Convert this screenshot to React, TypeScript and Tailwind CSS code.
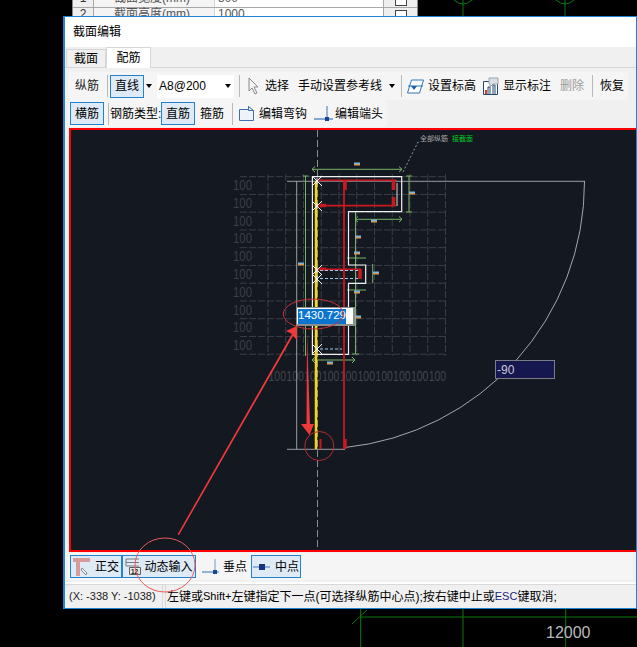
import type { ReactNode } from "react";

const cjk = "font-['Liberation_Sans','Noto_Sans_CJK_SC',sans-serif]";

function Sep({ className = "" }: { className?: string }) {
  return <div className={`w-px h-[22px] shrink-0 bg-[#b9b9b9] ${className}`} />;
}

function Caret({ className = "" }: { className?: string }) {
  return <div className={`w-0 h-0 shrink-0 border-x-[3.5px] border-x-transparent border-t-[4px] border-t-black ${className}`} />;
}

function Btn({ children, className = "" }: { children: ReactNode; className?: string }) {
  return (
    <div className={`flex items-center justify-center shrink-0 border border-[#2183cf] bg-[#deeaf5] ${className}`}>
      {children}
    </div>
  );
}

function CursorIcon() {
  return (
    <svg width="12" height="18" viewBox="0 0 12 18" className="ml-[8px] shrink-0">
      <path d="M1 1v13l3-3 3 6 2-1-3-6h4z" fill="#f4f4f4" stroke="#8a8a8a" />
    </svg>
  );
}

function LevelIcon() {
  return (
    <svg width="17" height="15" viewBox="0 0 17 15" className="ml-[5px] shrink-0">
      <path d="M4.5 1h12l-4 13H.5z" fill="#fff" stroke="#2b77bd" />
      <path d="M1 7h15" stroke="#2b77bd" />
      <path d="M4 7h6l-3 4z" fill="#1c5ea8" />
    </svg>
  );
}

function NoteIcon() {
  return (
    <svg width="16" height="18" viewBox="0 0 16 18" className="ml-[7px] shrink-0">
      <path d="M.5 4.5h14v13H.5z" fill="#fff" stroke="#24496f" />
      <path d="M5 17V10h2v7M10 17V8h2v9" fill="#fff" stroke="#24496f" />
      <path d="M2 13h2v4H2z" fill="#d9401e" />
      <path d="M6 1h9v6h-5l-3 3V7H6z" fill="#d9dfe6" stroke="#9aa5b0" />
    </svg>
  );
}

function HookIcon() {
  return (
    <svg width="15" height="17" viewBox="0 0 15 17" className="ml-[6px] shrink-0">
      <path d="M.5 4.5h9v-3l5 4v10H.5z" fill="#eef3fa" stroke="#3c6fb4" />
      <path d="M9.5 1.5v4h5" fill="none" stroke="#3c6fb4" />
    </svg>
  );
}

function EndIcon() {
  return (
    <svg width="19" height="16" viewBox="0 0 19 16" className="ml-[7px] shrink-0">
      <path d="M0 13h19" stroke="#5b8ecb" strokeWidth="1.5" />
      <path d="M13 0v13" stroke="#3d74b8" />
      <rect x="11" y="11" width="4" height="4" fill="#1d3f86" />
    </svg>
  );
}

function OrthoIcon() {
  return (
    <svg width="18" height="20" viewBox="0 0 18 20" className="mr-[4px]">
      <path d="M0 1h17v4H7v14H3V5H0z" fill="#d79a9d" />
      <path d="M9 11l5 5-1 2-5-5z" fill="#e9eef3" stroke="#69727c" strokeWidth=".8" />
    </svg>
  );
}

function DynIcon() {
  return (
    <svg width="18" height="18" viewBox="0 0 18 18">
      <path d="M1 1h13M1 1v7h13M1 4.500h13" fill="none" stroke="#77797c" />
      <path d="M4.500 9.500h11v7h-11z" fill="#e8e8e8" stroke="#5f5f5f" />
      <text x="6" y="15.500" fontSize="6.500" fontFamily="Liberation Sans" fontWeight="700" fill="#222">12</text>
    </svg>
  );
}

function PerpIcon() {
  return (
    <svg width="17" height="16" viewBox="0 0 17 16">
      <path d="M0 13h17" stroke="#6e9bd0" strokeWidth="1.500" />
      <path d="M13 0v13" stroke="#6e9bd0" />
      <rect x="11" y="11" width="4" height="4" fill="#1d4590" />
    </svg>
  );
}

function MidIcon() {
  return (
    <svg width="17" height="8" viewBox="0 0 17 8">
      <path d="M0 4h17" stroke="#6e9bd0" strokeWidth="1.500" />
      <rect x="6" y="1" width="6" height="6" fill="#15337e" />
    </svg>
  );
}

function Cross({ x, y }: { x: number; y: number }) {
  return (
    <path
      d={`M${x - 5} ${y - 5}L${x + 5} ${y + 5}M${x - 5} ${y + 5}L${x + 5} ${y - 5}M${x} ${y - 3}v6`}
      stroke="#f2f2f2"
      strokeWidth="1"
    />
  );
}

const gridY = [0, 1, 2, 3, 4, 5, 6, 7, 8, 9, 10].map((k) => 176.7 + 17.75 * k);
const gridX = [0, 1, 2, 3, 4, 5, 6, 7, 8, 9, 10].map((k) => 268 + 17.75 * k);
const labelY = [0, 1, 2, 3, 4, 5, 6, 7, 8, 9].map((k) => 185 + 17.8 * k);
const labelX = [0, 1, 2, 3, 4, 5, 6, 7, 8, 9].map((k) => 268.5 + 17.8 * k);
const marks = [
  [357, 164], [412, 193], [374, 221], [358, 237], [357, 253], [301, 264],
  [376, 273], [357, 292], [358, 317], [330, 363],
];

function Drawing() {
  return (
    <svg viewBox="71 130 566 420" className="w-[566px] h-[420px] block">
      {gridY.map((y) => (
        <path key={y} d={`M240 ${y}H447`} stroke="#3a3e47" strokeDasharray="7 2" />
      ))}
      {gridX.map((x) => (
        <path key={x} d={`M${x} 174V356`} stroke="#3a3e47" strokeDasharray="7 2" />
      ))}
      {labelY.map((y) => (
        <text key={y} x="233" y={y + 5} fontSize="14" fontFamily="Liberation Sans" fill="#3b3f47" textLength="19" lengthAdjust="spacingAndGlyphs">100</text>
      ))}
      {labelX.map((x) => (
        <text key={x} x={x} y="381" fontSize="14" fontFamily="Liberation Sans" fill="#42464e" textLength="17.500" lengthAdjust="spacingAndGlyphs">100</text>
      ))}

      <path d="M317.500 130V550" stroke="#8c8c8c" strokeDasharray="7 3" />
      <path d="M287 181.300H585M296.700 181V449.300M287 449.300H345" stroke="#9b9da1" fill="none" />
      <path d="M584.500 181A267 267 0 0 1 345 447.500" stroke="#a4a6aa" fill="none" />

      <path d="M305.500 176V356M312 169.300H402M409 176V212M355 219.300H402M355.500 212V354M347 258H366M372.700 264V283M347 290H366M312 360H355" stroke="#76b564" fill="none" />
      <path d="M315 166.500l-3 2.800 3 2.800M399 166.500l3 2.800-3 2.800M406 176h6M406 212h6M302.500 176h6M399 216.500l3 2.800-3 2.800M358 216.500l-3 2.800 3 2.800M352 354h7M315 357l-3 3 3 3M352 357l3 3-3 3" stroke="#76b564" fill="none" />

      <path d="M312.400 176.700H401.700V211.600H348.500V265H365.700V283.300H348.500V354.300H312.400Z" stroke="#f0f0f0" strokeWidth="1.200" fill="none" />
      <path d="M315 181H397" stroke="#4b8f98" strokeWidth="1.200" />
      <path d="M316 181V449" stroke="#f5d60f" strokeWidth="2.500" />

      <path d="M318 180.300H396M318 205.700H396M344 180V447M318 269.300H361" stroke="#c9181f" strokeWidth="1.800" fill="none" />
      <path d="M345 180v10M393.500 180v10M393.500 197v9M320 205.500h6M320 269.300h6M360 269v10M345 439v10" stroke="#c9181f" strokeWidth="3.500" fill="none" />
      <path d="M320.500 439v10" stroke="#c9181f" strokeWidth="2" />
      <path d="M397 183V206" stroke="#d8d8d8" />
      <path d="M320 270.500H360M320 278.500H360M320 349H342" stroke="#9ccbee" strokeDasharray="3 2" />

      <Cross x={317} y={181} />
      <Cross x={317} y={206} />
      <Cross x={317} y={270} />
      <Cross x={317} y={279} />
      <Cross x={317} y={349} />

      {marks.map(([x, y]) => (
        <g key={`${x}-${y}`}>
          <rect x={x - 3} y={y - 1.5} width="6" height="1.500" fill="#7db4dc" />
          <rect x={x - 3} y={y} width="6" height="1.500" fill="#d39a55" />
        </g>
      ))}

      <path d="M403 172L418 142H420" stroke="#9a9a9a" strokeDasharray="2 2" fill="none" />
      <text x="420" y="141" fontSize="7" fontFamily="Noto Sans CJK SC" fill="#a9a9a9">全部纵筋</text>
      <text x="452" y="141" fontSize="7" fontFamily="Noto Sans CJK SC" fill="#00cc22">接截面</text>
    </svg>
  );
}

export default function App() {
  return (
    <div className={`relative w-[637px] h-[647px] overflow-hidden bg-black text-[12px] leading-none text-black whitespace-nowrap ${cjk}`}>
      {/* CAD 背景 */}
      <svg width="637" height="647" className="absolute inset-0">
        <path d="M463 0V16M565 0V16M360.700 608V647M463 608V647M565.700 608V647M360 617H637" stroke="#0b7a12" fill="none" />
        <path d="M454 0Q463 8 472 0M556 0Q565 8 574 0" stroke="#0b7a12" fill="none" />
        <path d="M352 624L367 610" stroke="#0b7a12" />
      </svg>
      <div className="absolute left-[546px] top-[625px] text-[16px] text-[#b8b8b8]">12000</div>

      {/* 后面的属性窗口 */}
      <div className="absolute left-[72px] top-0 w-[346px] h-[16px] overflow-hidden bg-white border-x border-[#8a8a8a]">
        <div className="-mt-[8px]">
          {["截面宽度(mm)|800", "截面高度(mm)|1000"].map((row, i) => (
            <div key={row} className="flex h-[16px] border-b border-[#a8a8a8]">
              <div className="w-[21px] bg-[#efefef] border-r border-[#a8a8a8] text-center text-[#333]">{i + 1}</div>
              <div className="w-[121px] pl-[20px] border-r border-[#d0d0d0] text-[#555] bg-[#f4f4f4]">{row.split("|")[0]}</div>
              <div className="w-[169px] pl-[3px] border-r border-[#a8a8a8] text-[#555]">{row.split("|")[1]}</div>
              <div className="flex-1 flex justify-center items-center bg-[#efefef]">
                <div className="w-[12px] h-[12px] border border-[#444] bg-white" />
              </div>
            </div>
          ))}
        </div>
      </div>

      {/* 截面编辑 */}
      <div className="absolute left-[63px] top-[16px] w-[575px] h-[593px] flex flex-col border-x-2 border-y border-[#1d86d6] bg-[#f0f0f0]">
        <div className="h-[30px] shrink-0 bg-white flex items-center pl-[8px]">截面编辑</div>

        <div className="h-[21px] shrink-0 flex items-end border-b border-[#d6d6d6] pl-[1px]">
          <div className="w-[40px] h-[18px] flex items-center justify-center border border-b-0 border-[#d6d6d6]">截面</div>
          <div className="w-[45px] h-[21px] -mb-px flex items-center justify-center bg-white border border-b-0 border-[#d6d6d6]">配筋</div>
        </div>

        <div className="mt-[4px] ml-[3px] mr-[8px] h-[28px] shrink-0 flex items-center bg-[#f5f5f5] rounded-sm">
          <span className="ml-[7px] text-[#222]">纵筋</span>
          <Sep className="ml-[8px]" />
          <Btn className="ml-[2px] w-[34px] h-[23px]">直线</Btn>
          <Caret className="ml-[2px]" />
          <div className="ml-[5px] w-[77px] h-[23px] shrink-0 bg-white flex items-center justify-between pl-[2px] pr-[3px]">
            A8@200
            <Caret />
          </div>
          <Sep className="ml-[5px]" />
          <CursorIcon />
          <span className="ml-[5px]">选择</span>
          <span className="ml-[9px]">手动设置参考线</span>
          <Caret className="ml-[7px]" />
          <Sep className="ml-[6px]" />
          <LevelIcon />
          <span className="ml-[4px]">设置标高</span>
          <NoteIcon />
          <span className="ml-[4px]">显示标注</span>
          <span className="ml-[9px] text-[#9a9a9a]">删除</span>
          <Sep className="ml-[8px]" />
          <span className="ml-[7px]">恢复</span>
        </div>

        <div className="ml-[3px] w-[319px] h-[27px] shrink-0 flex items-center bg-[#f5f5f5] rounded-sm">
          <Btn className="ml-[2px] w-[34px] h-[23px]">横筋</Btn>
          <Sep className="ml-[4px]" />
          <span className="ml-[1px] w-[51px] shrink-0">钢筋类型:</span>
          <Btn className="w-[34px] h-[23px]">直筋</Btn>
          <span className="ml-[5px]">箍筋</span>
          <Sep className="ml-[8px]" />
          <HookIcon />
          <span className="ml-[5px]">编辑弯钩</span>
          <EndIcon />
          <span className="ml-[2px]">编辑端头</span>
        </div>

        <div className="mt-px ml-[4px] h-[424px] shrink-0 border-y-2 border-l-2 border-[#ff0000] bg-[#141821] relative overflow-hidden">
          <Drawing />
          <div className="absolute left-[225px] top-[177px] w-[59px] h-[19px] bg-white border-2 border-t border-l border-[#8d8d8d] flex items-center pl-px">
            <span className="bg-[#0a74cf] text-white text-[11.500px] h-[15px] flex items-center">1430.729</span>
          </div>
          <div className="absolute left-[424px] top-[230px] w-[60px] h-[19px] bg-[#17174f] border border-[#7d7d85] text-[#c8c8d8] flex items-center pl-px">-90</div>
        </div>

        <div className="mt-px ml-[3px] mr-[3px] h-[27px] shrink-0 flex items-center bg-[#f5f5f5]">
          <Btn className="ml-[2px] w-[52px] h-[23px]"><OrthoIcon />正交</Btn>
          <Btn className="w-[74px] h-[23px] gap-px"><DynIcon />动态输入</Btn>
          <div className="ml-[6px]"><PerpIcon /></div>
          <span className="ml-[4px]">垂点</span>
          <Btn className="ml-[4px] w-[50px] h-[23px] gap-[5px]"><MidIcon />中点</Btn>
        </div>

        <div className="mt-[2px] h-[2px] shrink-0 bg-white" />
        <div className="flex-1 flex border-t border-[#d9d9d9]">
          <div className="w-[97px] ml-[1px] flex items-center pl-[3px] border-r border-[#d9d9d9] text-[#222] text-[11px]">(X: -338 Y: -1038)</div>
          <div className="flex-1 ml-[2px] flex items-center pl-[1px] border-l border-[#d9d9d9]">
            左键或<span className="text-[11px]">Shift+</span>左键指定下一点(可选择纵筋中心点);按右键中止或<span className="text-[11px] text-[#1c1c7a]">ESC</span>键取消;
          </div>
        </div>
      </div>

      {/* 标注 */}
      <svg width="637" height="647" className="absolute inset-0 pointer-events-none">
        <ellipse cx="313.300" cy="314" rx="30" ry="15" fill="none" stroke="#c8323a" />
        <circle cx="319.300" cy="446" r="14.500" fill="none" stroke="#b92b30" />
        <ellipse cx="165" cy="565" rx="30" ry="27" fill="none" stroke="#ea5a5a" />
        <path d="M177.500 534.500L292 334L286 331L297 326L297 340L293 336L179 535Z" fill="#f03a3a" />
        <path d="M307 332L306.500 424H301L309.500 435L314 424H310Z" fill="#f03a3a" />
      </svg>
    </div>
  );
}
